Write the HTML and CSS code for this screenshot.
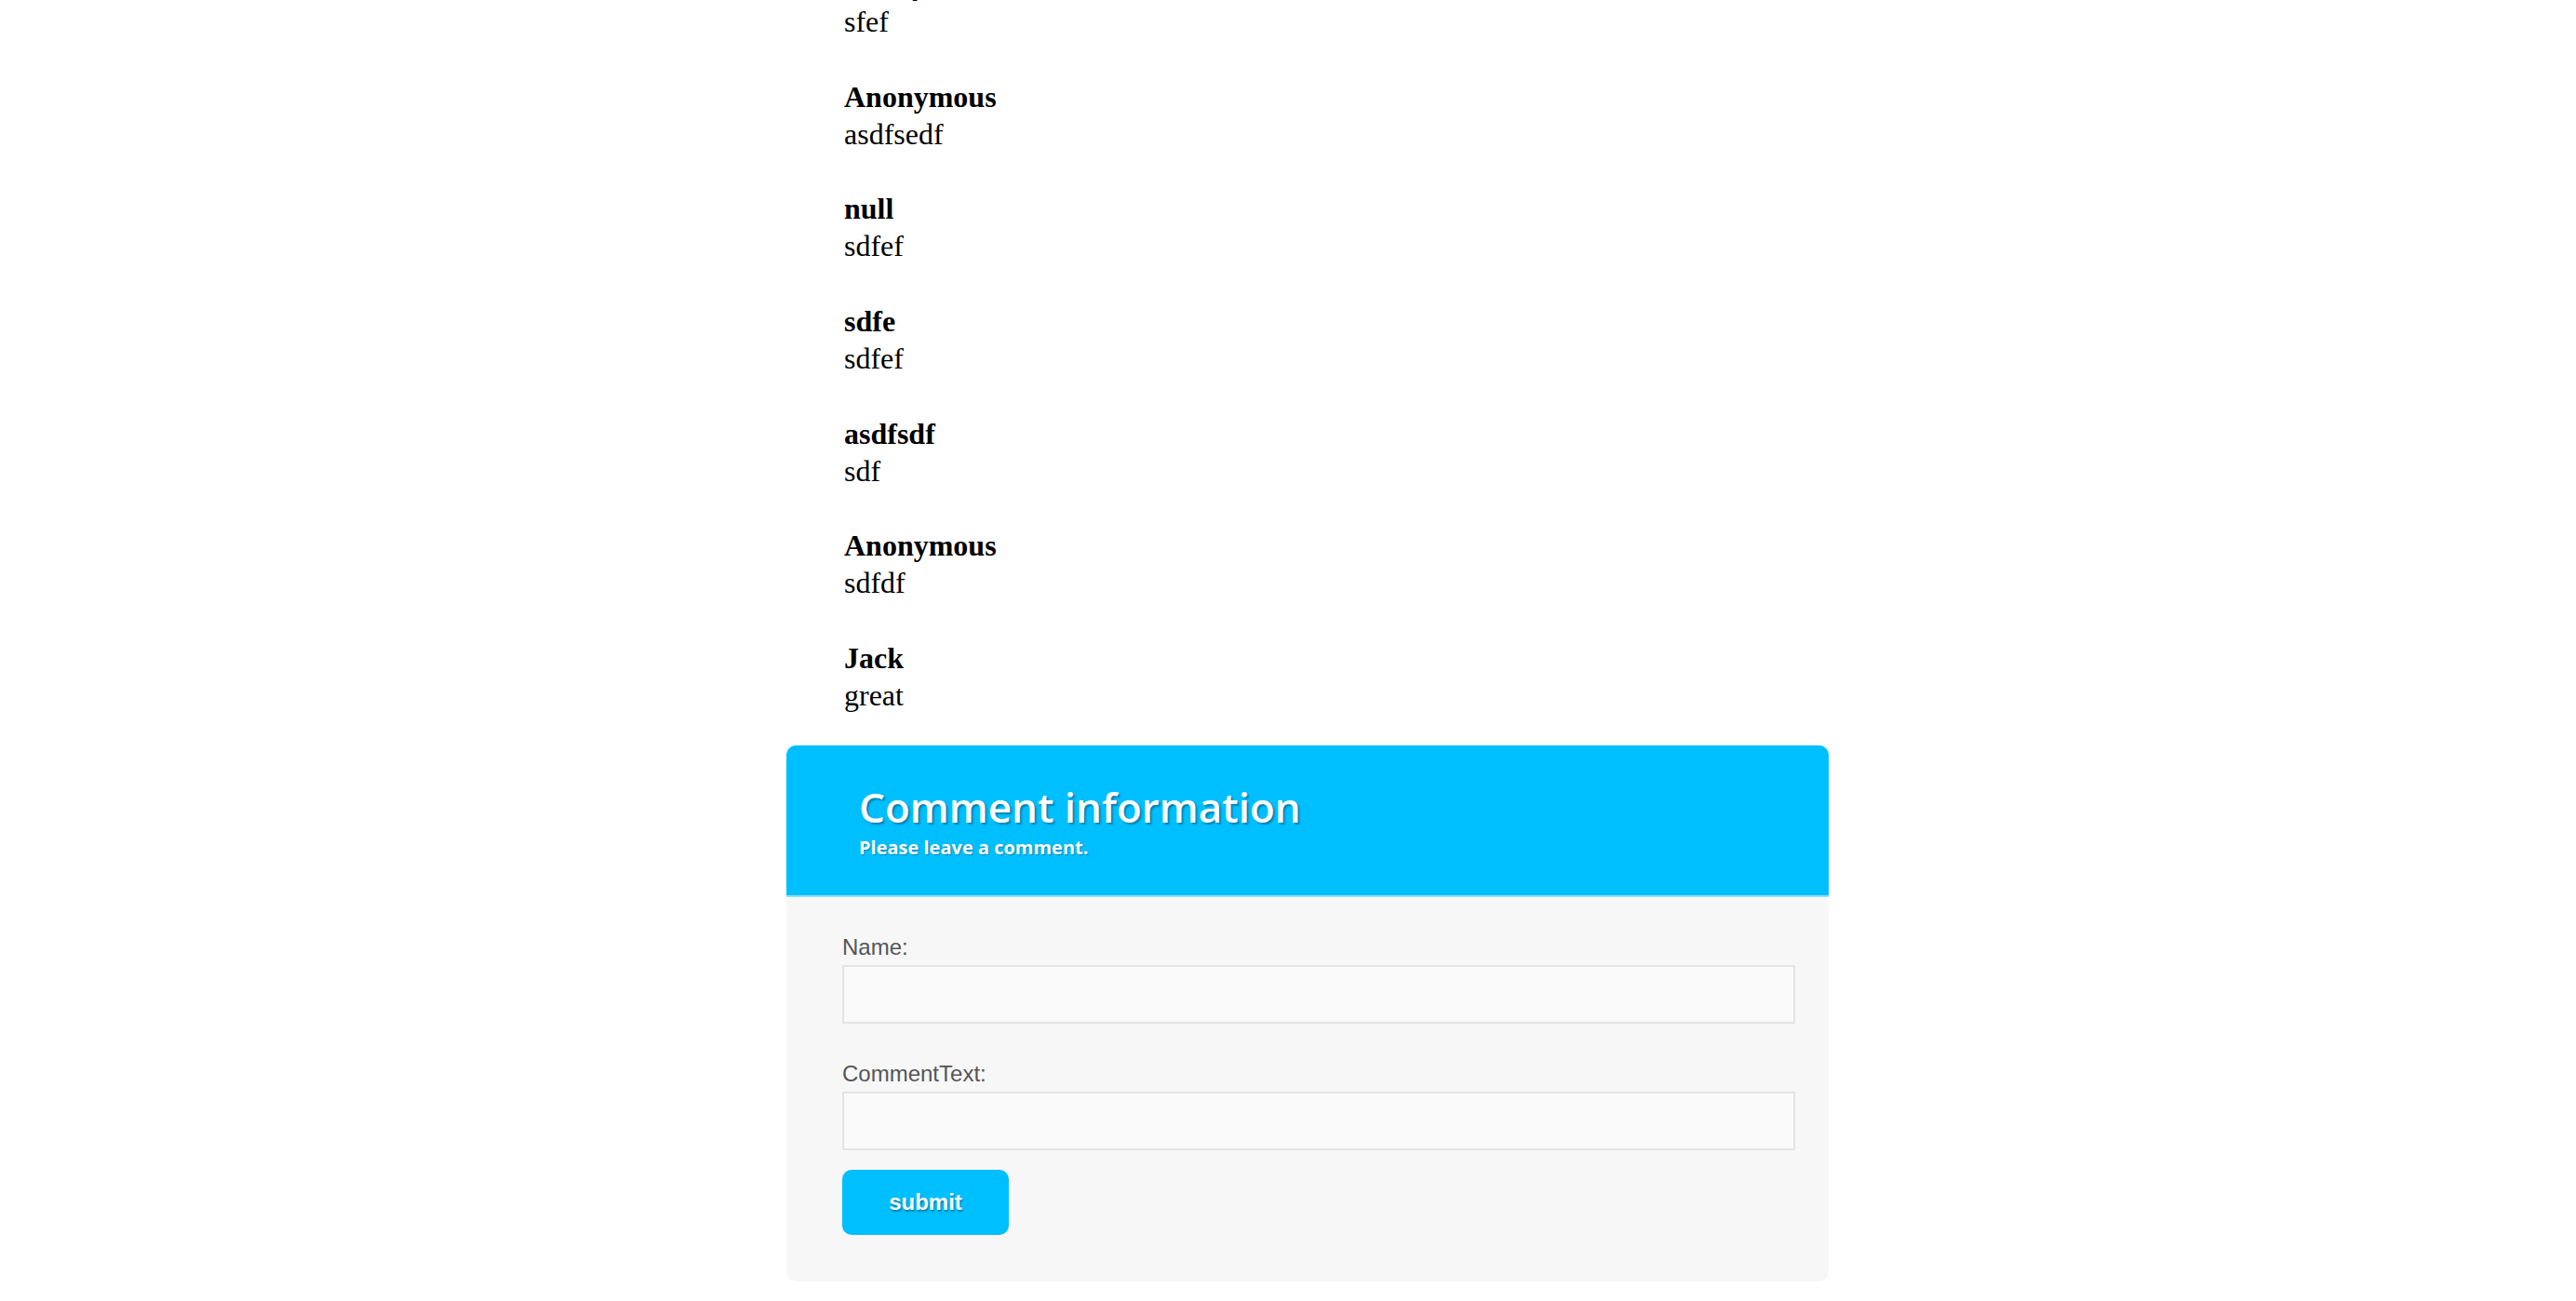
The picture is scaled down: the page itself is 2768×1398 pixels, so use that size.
FILE: index.html
```html
<!DOCTYPE html>
<html lang="en">
<head>
<meta charset="utf-8">
<title>Comments</title>
<link rel="stylesheet" href="styles.css">
</head>
<body>
<div class="page">
  <div class="comments">
    <div class="comment"><div class="author">Bobby</div><div class="text">sfef</div></div>
    <div class="comment"><div class="author">Anonymous</div><div class="text">asdfsedf</div></div>
    <div class="comment"><div class="author">null</div><div class="text">sdfef</div></div>
    <div class="comment"><div class="author">sdfe</div><div class="text">sdfef</div></div>
    <div class="comment"><div class="author">asdfsdf</div><div class="text">sdf</div></div>
    <div class="comment"><div class="author">Anonymous</div><div class="text">sdfdf</div></div>
    <div class="comment"><div class="author">Jack</div><div class="text">great</div></div>
  </div>
  <div class="card">
    <div class="card-header">
      <h1 class="card-title">Comment information</h1>
      <p class="card-subtitle">Please leave a comment.</p>
    </div>
    <form class="card-body">
      <div class="field">
        <label class="field-label" for="name">Name:</label>
        <input class="field-input" id="name" type="text">
      </div>
      <div class="field">
        <label class="field-label" for="ctext">CommentText:</label>
        <input class="field-input" id="ctext" type="text">
      </div>
      <button type="button" class="submit">submit</button>
    </form>
  </div>
</div>
</body>
</html>
```

FILE: styles.css
```css
body {
  margin: 0;
  background: #ffffff;
}

.page {
  width: 1120px;
  margin: -37px 0 0 845px;
}

.comments {
  display: flex;
  flex-direction: column;
  gap: 40.67px;
  padding-left: 62px;
  margin-bottom: 34px;
  font-family: "Liberation Serif", "Times New Roman", serif;
  font-size: 32px;
  line-height: 40px;
  color: #000;
}

.author {
  font-weight: 700;
}

.card {
  border-radius: 10px;
  overflow: hidden;
  background: #f7f7f7;
}

.card-header {
  background: #00bfff;
  padding: 44px 78px 41px;
  border-bottom: 2px solid #8fe2fb;
}

.card-title {
  margin: 0;
  font-family: "Open Sans", "Noto Sans", sans-serif;
  font-weight: 600;
  font-size: 44px;
  line-height: 45px;
  color: #fff;
  text-shadow: 2px 2px 2px rgba(0, 0, 0, 0.32);
}

.card-subtitle {
  margin: 11px 0 0;
  font-family: "Open Sans", "Noto Sans", sans-serif;
  font-weight: 700;
  font-size: 20px;
  line-height: 20px;
  color: #fff;
  text-shadow: 1px 1px 1px rgba(0, 0, 0, 0.3);
}

.card-body {
  display: flex;
  flex-direction: column;
  padding: 40px 60px 50px;
  margin: 0;
}

.field {
  display: flex;
  flex-direction: column;
  align-items: flex-start;
  gap: 5px;
  margin-bottom: 40px;
}

.field:last-of-type {
  margin-bottom: 21px;
}

.field-label {
  font-family: "Liberation Sans", Arial, sans-serif;
  font-size: 24px;
  line-height: 28px;
  color: #555;
}

.field-input {
  box-sizing: border-box;
  width: 1024px;
  height: 63px;
  margin: 0;
  padding: 0 10px;
  border: 2px solid #e4e4e4;
  background: #fafafa;
  font-family: "Liberation Sans", Arial, sans-serif;
  font-size: 24px;
  outline: none;
}

.submit {
  align-self: flex-start;
  width: 179px;
  height: 70px;
  padding: 0;
  border: 0;
  border-radius: 10px;
  background: #00bfff;
  color: #fff;
  font-family: "Liberation Sans", Arial, sans-serif;
  font-weight: 700;
  font-size: 24px;
  text-shadow: 1px 2px 2px rgba(0, 0, 0, 0.35);
  cursor: pointer;
}
```
